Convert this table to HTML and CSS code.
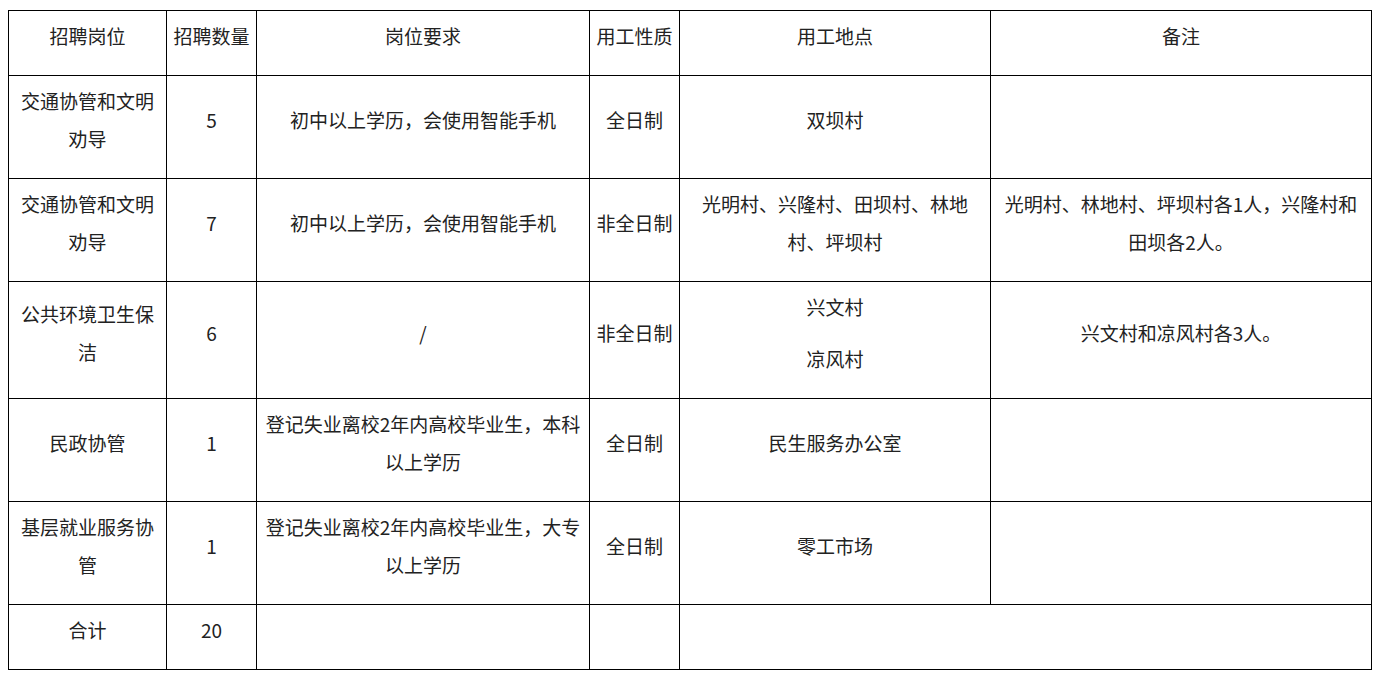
FILE: index.html
```html
<!DOCTYPE html>
<html lang="zh-CN">
<head>
<meta charset="utf-8">
<title>招聘岗位</title>
<link rel="stylesheet" href="styles.css">
</head>
<body>
<table class="jobs">
  <colgroup>
    <col class="c1"><col class="c2"><col class="c3"><col class="c4"><col class="c5"><col class="c6">
  </colgroup>
  <tr class="head">
    <td>招聘岗位</td><td>招聘数量</td><td>岗位要求</td><td>用工性质</td><td>用工地点</td><td>备注</td>
  </tr>
  <tr class="r1">
    <td>交通协管和文明劝导</td><td>5</td><td>初中以上学历，会使用智能手机</td><td>全日制</td><td>双坝村</td><td></td>
  </tr>
  <tr class="r2">
    <td>交通协管和文明劝导</td><td>7</td><td>初中以上学历，会使用智能手机</td><td>非全日制</td><td>光明村、兴隆村、田坝村、林地村、坪坝村</td><td>光明村、林地村、坪坝村各1人，兴隆村和田坝各2人。</td>
  </tr>
  <tr class="r3">
    <td>公共环境卫生保洁</td><td>6</td><td>/</td><td>非全日制</td><td><p class="para">兴文村</p><p class="para last">凉风村</p></td><td>兴文村和凉风村各3人。</td>
  </tr>
  <tr class="r4">
    <td>民政协管</td><td>1</td><td>登记失业离校2年内高校毕业生，本科以上学历</td><td>全日制</td><td>民生服务办公室</td><td></td>
  </tr>
  <tr class="r5">
    <td>基层就业服务协管</td><td>1</td><td>登记失业离校2年内高校毕业生，大专以上学历</td><td>全日制</td><td>零工市场</td><td></td>
  </tr>
  <tr class="total">
    <td>合计</td><td>20</td><td></td><td></td><td colspan="2"></td>
  </tr>
</table>
</body>
</html>
```
FILE: styles.css
```css
html, body {
  background: #fff;
}
body {
  margin: 10px 8px 8px 8px;
  font-family: "Noto Sans CJK SC", "Noto Sans", sans-serif;
  font-size: 19px;
  color: #222;
}
.jobs {
  width: 1364px;
  border-collapse: collapse;
  table-layout: fixed;
}
.c1 { width: 158px; }
.c2 { width: 90px; }
.c3 { width: 333px; }
.c4 { width: 90px; }
.c5 { width: 311px; }
.c6 { width: auto; }
.jobs td {
  border: 1px solid #000;
  padding: 6px 6px 20px 6px;
  line-height: 38px;
  text-align: center;
  vertical-align: middle;
}
.head td,
.total td {
  height: 38px;
}
.r1 td,
.r2 td,
.r4 td,
.r5 td {
  height: 76px;
}
.para {
  margin: 0 0 14px 0;
}
.para.last {
  margin-bottom: 0;
}
```
